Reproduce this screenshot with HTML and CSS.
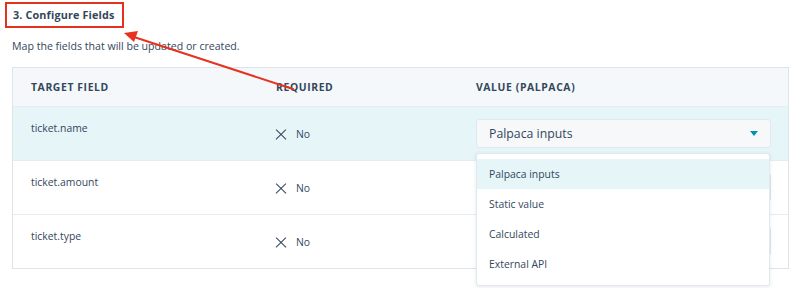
FILE: index.html
```html
<!DOCTYPE html>
<html>
  <head>
    <meta http-equiv="Content-type" content="text/html; charset=utf-8">
    <title>Configure Fields</title>
    <link rel="stylesheet" href="styles.css">
  </head>
  <body>
    <div class="step">
      <h2 class="step_title">3. Configure Fields</h2>
      <p class="step_desc">Map the fields that will be updated or created.</p>

      <div class="map_table">
        <div class="map_row map_head">
          <div>Target field</div>
          <div>Required</div>
          <div>Value (Palpaca)</div>
        </div>

        <div class="map_row active">
          <div class="field_name">ticket.name</div>
          <div class="req"><span class="x_icon"></span>No</div>
          <div class="value_cell">
            <div class="select">Palpaca inputs<span class="caret"></span></div>
            <ul class="menu">
              <li class="on">Palpaca inputs</li>
              <li>Static value</li>
              <li>Calculated</li>
              <li>External API</li>
            </ul>
          </div>
        </div>

        <!-- selects of the next rows sit under the open menu -->
        <div class="map_row">
          <div class="field_name">ticket.amount</div>
          <div class="req"><span class="x_icon"></span>No</div>
          <div class="value_cell"><div class="select"></div></div>
        </div>

        <div class="map_row">
          <div class="field_name">ticket.type</div>
          <div class="req"><span class="x_icon"></span>No</div>
          <div class="value_cell"><div class="select"></div></div>
        </div>
      </div>
    </div>

    <!-- annotation arrow -->
    <svg class="note_arrow" width="800" height="288" viewBox="0 0 800 288">
      <line x1="293" y1="89" x2="134" y2="37" stroke="#e5331f" stroke-width="2" stroke-linecap="round"/>
      <polygon points="124,33 138,31 134,42" fill="#e5331f"/>
    </svg>
  </body>
</html>
```

FILE: styles.css
```css
body,html {margin:0; background:#fff;}
body {font-family:"Open Sans","Noto Sans",sans-serif; color:#33475b; position:relative; width:800px; height:288px; overflow:hidden;}

.step {padding:2px 11px 0 12px;}
.step_title {display:inline-block; margin:0 0 0 -7px; padding:0 8px 0 6px; height:22px; line-height:22px; border:2px solid #e2321e; font-size:10.8px; font-weight:700; letter-spacing:0.15px;}
.step_desc {margin:10px 0 0 0; font-size:10.6px; line-height:16px;}

.map_table {margin-top:13px; border:1px solid #dfe3eb;}
.map_row {display:grid; grid-template-columns:245px 200px 295px; padding:0 18px; height:53px; border-top:1px solid #e8ecf1; font-size:10.4px;}
.map_row:first-child {border-top:0;}
.map_head {height:38px; align-items:center; background:#f5f8fa; text-transform:uppercase; font-weight:700; font-size:10.4px; letter-spacing:0.6px;}
.map_row.active {background:#e5f5f8;}

.field_name {padding-top:13px; line-height:16px;}
.req {display:flex; align-items:center; height:28px; margin-top:13px;}
.x_icon {position:relative; width:10px; height:10px; margin-right:10px;}
.x_icon:before,.x_icon:after {content:""; position:absolute; left:-2px; top:4.5px; width:14px; height:1.2px; background:#33475b; transform:rotate(45deg);}
.x_icon:after {transform:rotate(-45deg);}

.value_cell {position:relative; padding-top:12px;}
.select {display:flex; align-items:center; justify-content:space-between; box-sizing:border-box; height:29px; padding:0 12px; border:1px solid #e3e8ee; border-radius:3px; background:#f6f8fa; font-size:12.3px;}
.caret {width:0; height:0; border-left:4px solid transparent; border-right:4px solid transparent; border-top:5px solid #0091ae;}

.menu {position:absolute; z-index:2; left:0; top:46px; width:294px; box-sizing:border-box; margin:0; padding:5px 0 6px 0; list-style:none; background:#fff; border:1px solid #e3e8ee; border-radius:3px; box-shadow:0 1px 4px rgba(45,62,80,0.12);}
.menu li {height:30px; line-height:30px; padding-left:12px; font-size:10.4px;}
.menu li.on {background:#e5f5f8;}

.note_arrow {position:absolute; left:0; top:0; pointer-events:none; z-index:5;}
```
